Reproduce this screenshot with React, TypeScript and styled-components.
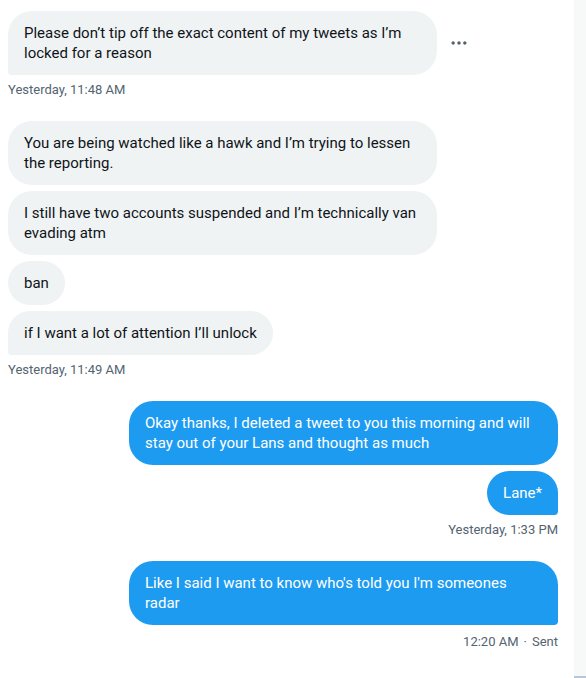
import React from "react";
import styled, { createGlobalStyle } from "styled-components";

const Global = createGlobalStyle`
  * { box-sizing: border-box; }
  body { margin: 0; background: #ffffff; font-family: Roboto, "Liberation Sans", sans-serif; }
`;

const Page = styled.div`
  display: flex;
  min-height: 100vh;
`;

const Conversation = styled.main`
  flex: 1;
  min-width: 0;
  display: flex;
  flex-direction: column;
  gap: 22px;
  padding: 11px 16px 16px 8px;
`;

const ScrollTrack = styled.aside`
  flex: 0 0 12px;
  background: #f7f9f9;
  border-bottom: 2px solid #b9c6d3;
`;

const Group = styled.section<{ $sent?: boolean }>`
  display: flex;
  flex-direction: column;
  align-items: ${(p) => (p.$sent ? "flex-end" : "flex-start")};
  gap: 6px;
`;

const Row = styled.div<{ $sent?: boolean }>`
  display: flex;
  align-items: center;
  justify-content: ${(p) => (p.$sent ? "flex-end" : "flex-start")};
  gap: 12px;
  width: 100%;
`;

const Bubble = styled.p<{ $sent?: boolean; $last?: boolean }>`
  margin: 0;
  max-width: 78%;
  padding: 12px 16px;
  font-size: 15px;
  line-height: 20px;
  color: ${(p) => (p.$sent ? "#ffffff" : "#0f1419")};
  background: ${(p) => (p.$sent ? "#1d9bf0" : "#eff3f4")};
  border-radius: ${(p) =>
    p.$last ? (p.$sent ? "24px 24px 4px 24px" : "24px 24px 24px 4px") : "24px"};
`;

const Footer = styled.div<{ $status?: boolean }>`
  display: flex;
  gap: 5px;
  font-size: 13px;
  line-height: ${(p) => (p.$status ? "22px" : "18px")};
  color: #536471;
`;

const MoreButton = styled.button`
  display: flex;
  padding: 0;
  border: 0;
  background: none;
  color: #536471;
  cursor: pointer;
`;

type Message = { text: string; more?: boolean };
type Block = { sent?: boolean; stamp: string; status?: string; messages: Message[] };

const blocks: Block[] = [
  {
    stamp: "Yesterday, 11:48 AM",
    messages: [
      {
        text: "Please don’t tip off the exact content of my tweets as I’m locked for a reason",
        more: true,
      },
    ],
  },
  {
    stamp: "Yesterday, 11:49 AM",
    messages: [
      { text: "You are being watched like a hawk and I’m trying to lessen the reporting." },
      { text: "I still have two accounts suspended and I’m technically van evading atm" },
      { text: "ban" },
      { text: "if I want a lot of attention I’ll unlock" },
    ],
  },
  {
    sent: true,
    stamp: "Yesterday, 1:33 PM",
    messages: [
      {
        text: "Okay thanks, I deleted a tweet to you this morning and will stay out of your Lans and thought as much",
      },
      { text: "Lane*" },
    ],
  },
  {
    sent: true,
    stamp: "12:20 AM",
    status: "Sent",
    messages: [{ text: "Like I said I want to know who's told you I'm someones radar" }],
  },
];

const MoreIcon = () => (
  <svg width="20" height="20" viewBox="0 0 24 24" fill="currentColor" aria-hidden="true">
    <path d="M3 12c0-1.1.9-2 2-2s2 .9 2 2-.9 2-2 2-2-.9-2-2zm9 2c1.1 0 2-.9 2-2s-.9-2-2-2-2 .9-2 2 .9 2 2 2zm7 0c1.1 0 2-.9 2-2s-.9-2-2-2-2 .9-2 2 .9 2 2 2z" />
  </svg>
);

export default function App() {
  return (
    <Page>
      <Global />
      <Conversation>
        {blocks.map((block) => (
          <Group key={block.stamp} $sent={block.sent}>
            {block.messages.map((message, i) => (
              <Row key={message.text} $sent={block.sent}>
                <Bubble $sent={block.sent} $last={i === block.messages.length - 1}>
                  {message.text}
                </Bubble>
                {message.more && (
                  <MoreButton type="button" aria-label="More options">
                    <MoreIcon />
                  </MoreButton>
                )}
              </Row>
            ))}
            <Footer $status={Boolean(block.status)}>
              <time>{block.stamp}</time>
              {block.status && (
                <>
                  <span>·</span>
                  <span>{block.status}</span>
                </>
              )}
            </Footer>
          </Group>
        ))}
      </Conversation>
      <ScrollTrack />
    </Page>
  );
}
